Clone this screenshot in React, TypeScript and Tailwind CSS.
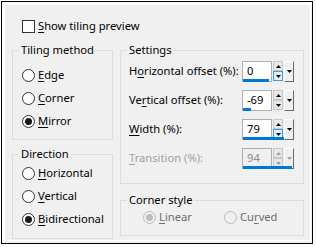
import React from 'react';

const font = { fontFamily: '"Noto Sans", "Open Sans", sans-serif' };

const U = ({ children }: { children: React.ReactNode }) => <span className="underline underline-offset-2">{children}</span>;

const Radio = ({ checked, disabled }: { checked?: boolean; disabled?: boolean }) => (
  <span
    className={`flex items-center justify-center w-[13px] h-[13px] rounded-full border ${
      disabled ? 'border-[#bcbcbc] bg-[#f0f0f0]' : 'border-[#333333] bg-white'
    }`}
  >
    {checked && <span className={`w-[7px] h-[7px] rounded-full ${disabled ? 'bg-[#bcbcbc]' : 'bg-[#1a1a1a]'}`} />}
  </span>
);

const RadioRow = ({ label, checked, disabled, h = 'h-[23px]' }: { label: React.ReactNode; checked?: boolean; disabled?: boolean; h?: string }) => (
  <div className={`flex items-center gap-[3px] whitespace-nowrap ${h}`}>
    <Radio checked={checked} disabled={disabled} />
    <span className={disabled ? 'text-[#6d6d6d]' : 'text-black'}>{label}</span>
  </div>
);

// padding goes on the inner div so the legend stays put
const Group = ({ title, className = '', inner, children }: { title: string; className?: string; inner: string; children: React.ReactNode }) => (
  <fieldset className={`border border-[#dcdcdc] ${className}`}>
    <legend className="ml-[6px] px-[2px] leading-4 text-black">{title}</legend>
    <div className={inner}>{children}</div>
  </fieldset>
);

const Tri = ({ up, color }: { up?: boolean; color: string }) => (
  <svg width="5" height="3" viewBox="0 0 5 3">
    <path d={up ? 'M0 3 L2.5 0 L5 3 Z' : 'M0 0 L5 0 L2.5 3 Z'} fill={color} />
  </svg>
);

const Spinner = ({ value, pct, disabled, hot }: { value: string; pct: number; disabled?: boolean; hot?: boolean }) => {
  const arrow = disabled ? '#a0a0a0' : '#000000';
  return (
    <div className="relative flex w-[52px] h-[21px] shrink-0">
      <div className={`flex items-center w-[31px] h-full border border-[#abadb3] pl-[4px] ${disabled ? 'bg-[#f0f0f0] text-[#8c8c8c]' : 'bg-white text-black'}`}>
        {value}
      </div>
      <div className="flex flex-col w-[11px] h-full ml-px">
        <div className="flex items-center justify-center h-[10px] border border-[#c8c8c8] bg-[#e8e8e8]">
          <Tri up color={arrow} />
        </div>
        <div className={`flex items-center justify-center h-[10px] border ${hot ? 'border-[#3c9be6] bg-[#e5f1fb]' : 'border-[#c8c8c8] bg-[#e8e8e8]'}`}>
          <Tri color={arrow} />
        </div>
      </div>
      <div className="flex items-center justify-center w-[10px] h-full border-t border-l border-t-white border-l-white border-r border-b border-r-[#696969] border-b-[#696969] bg-[#f0f0f0] ml-px">
        <Tri color={arrow} />
      </div>
      <div className="absolute left-px bottom-0 h-[3px] bg-[#0078d7]" style={{ width: `${pct}%` }} />
    </div>
  );
};

const SettingRow = ({ label, disabled, children }: { label: React.ReactNode; disabled?: boolean; children: React.ReactNode }) => (
  <div className="flex items-center justify-between h-[21px] whitespace-nowrap">
    <span className={disabled ? 'text-[#a0a0a0]' : 'text-black'}>{label}</span>
    {children}
  </div>
);

export default function App() {
  return (
    <div className="w-[316px] h-[247px] bg-white text-[11.2px] overflow-hidden" style={font}>
      <div className="ml-px mt-px w-[312px] h-[243px] border border-black">
        <div className="w-full h-full border-t-[3px] border-l-[3px] border-white bg-[#f0f0f0]">
          <div className="w-[306px] h-[236px] border-r border-b border-white">
            <div className="flex items-center gap-[3px] pl-[17px] pt-[11px] h-[31px]">
              <span className="w-[13px] h-[13px] border border-[#333333] bg-white" />
              <span><U>S</U>how tiling preview</span>
            </div>
            <div className="flex gap-[7px] pl-[7px] pt-[6px]">
              <div className="flex flex-col w-[101px]">
                <Group title="Tiling method" inner="pl-[9px] pt-[6px] pb-[6px]">
                  <RadioRow label={<><U>E</U>dge</>} />
                  <RadioRow label={<><U>C</U>orner</>} />
                  <RadioRow label={<><U>M</U>irror</>} checked />
                </Group>
                <Group title="Direction" className="mt-[6px]" inner="pl-[9px] pb-[7px]">
                  <RadioRow label={<><U>H</U>orizontal</>} />
                  <RadioRow label={<><U>V</U>ertical</>} />
                  <RadioRow label={<><U>B</U>idirectional</>} checked />
                </Group>
              </div>
              <div className="flex flex-col w-[184px]">
                <Group title="Settings" inner="flex flex-col gap-[8px] pl-[8px] pr-[9px] pt-[3px] pb-[14px]">
                  <SettingRow label={<>H<U>o</U>rizontal offset (%):</>}>
                    <Spinner value="0" pct={50} hot />
                  </SettingRow>
                  <SettingRow label={<>Ve<U>r</U>tical offset (%):</>}>
                    <Spinner value="-69" pct={15} />
                  </SettingRow>
                  <SettingRow label={<><U>W</U>idth (%):</>}>
                    <Spinner value="79" pct={79} hot />
                  </SettingRow>
                  <SettingRow label={<><U>T</U>ransition (%):</>} disabled>
                    <Spinner value="94" pct={94} disabled />
                  </SettingRow>
                </Group>
                <Group title="Corner style" className="mt-[8px]" inner="flex pl-[22px] pb-[9px]">
                  <div className="w-[81px]">
                    <RadioRow label={<><U>L</U>inear</>} checked disabled h="h-[18px]" />
                  </div>
                  <RadioRow label={<>Cu<U>r</U>ved</>} disabled h="h-[18px]" />
                </Group>
              </div>
            </div>
          </div>
        </div>
      </div>
    </div>
  );
}
